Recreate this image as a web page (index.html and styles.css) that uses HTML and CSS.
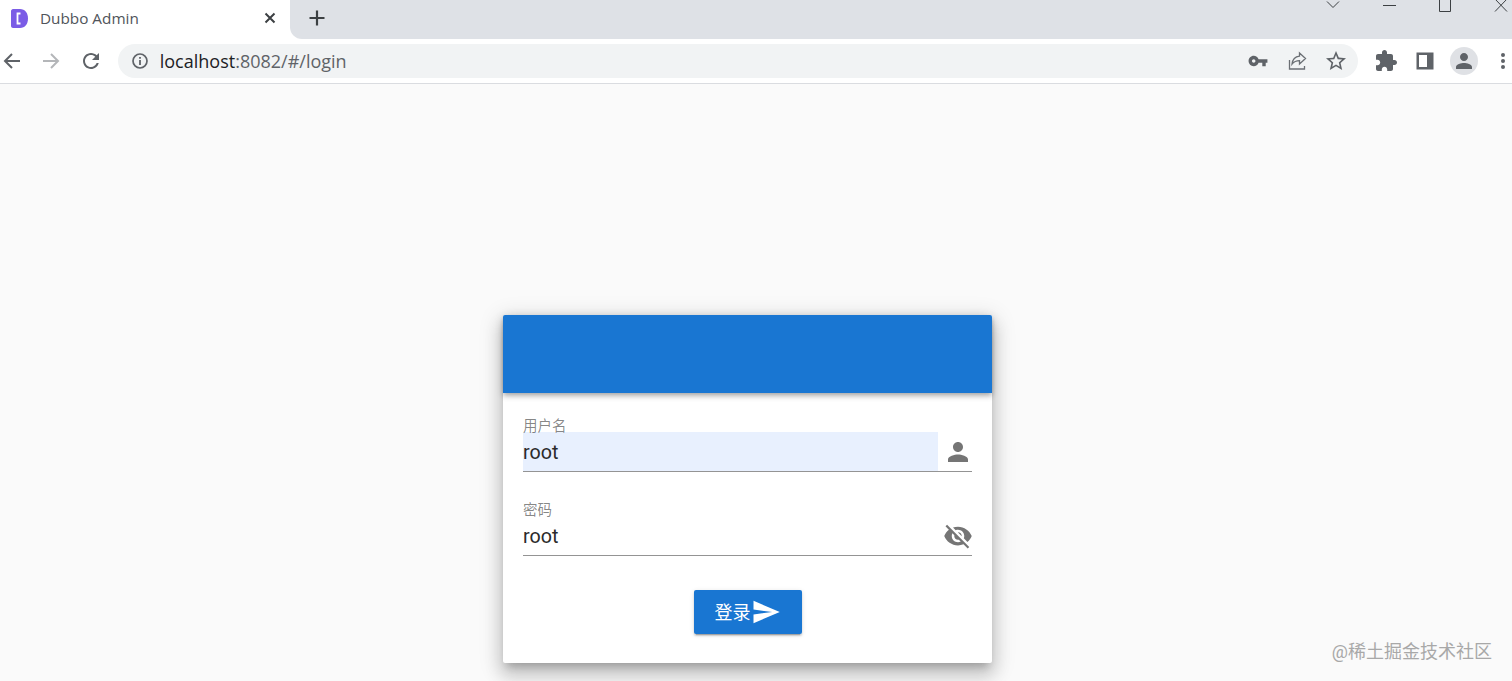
FILE: index.html

```html
<!DOCTYPE html>
<html lang="zh">
<head>
  <meta charset="UTF-8" />
  <meta name="viewport" content="width=device-width, initial-scale=1.0"/>
  <title>Dubbo Admin</title>
  <link rel="stylesheet" href="styles.css">
</head>
<body>
  <div class="tabstrip">
    <div class="tab">
      <svg class="favicon" viewBox="0 0 17 19"><path fill="#7b5ce6" d="M2 0h7c5 0 8 4 8 9.500S14 19 9 19H2c-1 0-2-1-2-2V2C0 1 1 0 2 0z"/><path fill="none" stroke="#fff" stroke-width="1.800" d="M9.500 4.500H6.500v10h3"/></svg>
      <span class="tab-title">Dubbo Admin</span>
      <svg class="icon" viewBox="0 0 24 24"><path fill="none" stroke="#3c4043" stroke-width="2" d="M7.500 6.500l9 9M16.500 6.500l-9 9"/></svg>
    </div>
    <div class="strip-rest">
      <svg class="icon new-tab" viewBox="0 0 24 24"><path fill="none" stroke="#3c4043" stroke-width="2.200" d="M12 4.500v15M4.500 12h15"/></svg>
      <div class="win-controls">
        <svg class="win-icon" viewBox="0 0 24 12"><path fill="none" stroke="#3c4043" d="M6 1.500l6 6 6-6"/></svg>
        <svg class="win-icon" viewBox="0 0 24 12"><path fill="none" stroke="#3c4043" d="M6 5.500h13"/></svg>
        <svg class="win-icon" viewBox="0 0 24 12"><path fill="none" stroke="#3c4043" d="M6.500-4h11v15.500h-11z"/></svg>
        <svg class="win-icon" viewBox="0 0 24 12"><path fill="none" stroke="#3c4043" d="M6-1l12 12.500M18-1L6 11.500"/></svg>
      </div>
    </div>
  </div>

  <div class="toolbar">
    <svg class="icon" viewBox="0 0 24 24"><path fill="none" stroke="#5f6368" stroke-width="2" d="M20 12H5M12 5l-7 7 7 7"/></svg>
    <svg class="icon" viewBox="0 0 24 24"><path fill="none" stroke="#b4b6b9" stroke-width="2" d="M4 12h15M12 5l7 7-7 7"/></svg>
    <svg class="icon" viewBox="0 0 24 24"><path fill="#5f6368" d="M17.650 6.350C16.200 4.900 14.210 4 12 4c-4.420 0-7.990 3.580-7.990 8s3.570 8 7.990 8c3.730 0 6.840-2.550 7.730-6h-2.080c-.82 2.330-3.040 4-5.650 4-3.310 0-6-2.690-6-6s2.690-6 6-6c1.660 0 3.140.69 4.220 1.780L13 11h7V4l-2.350 2.350z"/></svg>

    <div class="omnibox">
      <svg class="info" viewBox="0 0 18 18"><circle cx="9" cy="9" r="7" fill="none" stroke="#5f6368" stroke-width="1.700"/><path fill="none" stroke="#5f6368" stroke-width="1.800" d="M9 8v5M9 5v1.800"/></svg>
      <div class="url"><span class="host">localhost</span>:8082/#/login</div>
      <div class="omni-actions">
        <svg class="icon" viewBox="-2 -2 28 28"><path fill="#5f6368" d="M12.650 10C11.830 7.670 9.610 6 7 6c-3.310 0-6 2.690-6 6s2.690 6 6 6c2.610 0 4.830-1.670 5.650-4H17v4h4v-4h2v-4H12.650zM7 14c-1.100 0-2-.9-2-2s.9-2 2-2 2 .9 2 2-.9 2-2 2z"/></svg>
        <svg class="icon" viewBox="0 0 24 24"><path fill="none" stroke="#6b6f74" stroke-width="1.300" d="M4.500 11v9h15v-3M20.500 9.500l-6-5.500v3.200c-4.500.5-7 3.500-7.500 8 2-2.500 4.300-3.500 7.500-3.500V15z"/></svg>
        <svg class="icon" viewBox="0 0 24 24"><path fill="#5f6368" d="M22 9.240l-7.190-.62L12 2 9.190 8.630 2 9.240l5.460 4.730L5.820 21 12 17.270 18.180 21l-1.630-7.030L22 9.240zM12 15.400l-3.760 2.270 1-4.280-3.320-2.880 4.380-.38L12 6.100l1.710 4.040 4.380.38-3.320 2.880 1 4.280L12 15.400z"/></svg>
      </div>
    </div>

    <div class="tool-actions">
      <svg class="icon" viewBox="0 0 24 24"><path fill="#5f6368" d="M20.500 11H19V7c0-1.100-.9-2-2-2h-4V3.500C13 2.120 11.880 1 10.500 1S8 2.120 8 3.500V5H4c-1.100 0-1.990.9-1.990 2v3.800H3.500c1.490 0 2.700 1.210 2.700 2.700s-1.210 2.700-2.700 2.700H2V20c0 1.100.9 2 2 2h3.800v-1.500c0-1.490 1.210-2.700 2.700-2.700 1.490 0 2.700 1.210 2.700 2.700V22H17c1.100 0 2-.9 2-2v-4h1.500c1.380 0 2.500-1.120 2.500-2.500S21.880 11 20.500 11z"/></svg>
      <svg class="icon" viewBox="0 0 24 24"><path fill="#5f6368" fill-rule="evenodd" d="M3.500 3.500h17v17h-17zM6 6v12h8V6z"/></svg>
      <div class="avatar">
        <svg class="icon" viewBox="0 0 24 24"><path fill="#5f6368" d="M12 12c2.210 0 4-1.790 4-4s-1.790-4-4-4-4 1.790-4 4 1.790 4 4 4zm0 2c-2.670 0-8 1.340-8 4v2h16v-2c0-2.660-5.330-4-8-4z"/></svg>
      </div>
      <svg class="dots" viewBox="0 0 18 24"><circle cx="9" cy="6" r="2" fill="#5f6368"/><circle cx="9" cy="12" r="2" fill="#5f6368"/><circle cx="9" cy="18" r="2" fill="#5f6368"/></svg>
    </div>
  </div>

  <main class="page">
    <div class="card">
      <div class="card-header"></div>
      <form class="card-body">
        <div class="field">
          <label class="field-label">用户名</label>
          <div class="field-row">
            <input class="field-input autofilled" type="text" value="root" />
            <svg class="field-icon" viewBox="0 0 24 24"><path d="M12 12c2.210 0 4-1.790 4-4s-1.790-4-4-4-4 1.790-4 4 1.790 4 4 4zm0 2c-2.670 0-8 1.340-8 4v2h16v-2c0-2.660-5.330-4-8-4z"/></svg>
          </div>
        </div>
        <div class="field">
          <label class="field-label">密码</label>
          <div class="field-row">
            <input class="field-input" type="text" value="root" />
            <svg class="field-icon" viewBox="0 0 24 24"><path d="M12 7c2.760 0 5 2.240 5 5 0 .65-.13 1.260-.36 1.830l2.920 2.920c1.510-1.260 2.700-2.890 3.430-4.750-1.730-4.390-6-7.500-11-7.500-1.400 0-2.740.25-3.980.7l2.160 2.160C10.740 7.130 11.350 7 12 7zM2 4.270l2.280 2.280.46.46C3.080 8.300 1.780 10.020 1 12c1.730 4.390 6 7.500 11 7.500 1.550 0 3.030-.3 4.380-.84l.42.42L19.730 22 21 20.730 3.270 3 2 4.270zM7.530 9.800l1.550 1.550c-.05.21-.08.43-.08.65 0 1.660 1.340 3 3 3 .22 0 .44-.03.65-.08l1.550 1.550c-.67.33-1.410.53-2.200.53-2.760 0-5-2.240-5-5 0-.79.2-1.530.53-2.200zm4.310-.78l3.150 3.150.02-.16c0-1.660-1.340-3-3-3l-.17.01z"/></svg>
          </div>
        </div>
        <div class="actions">
          <button class="login-btn" type="button"><span class="login-text">登录</span><svg class="send" viewBox="0 0 24 24"><path fill="#fff" d="M2.010 21L23 12 2.010 3 2 10l15 2-15 2z"/></svg></button>
        </div>
      </form>
    </div>
  </main>

  <div class="watermark">@稀土掘金技术社区</div>
</body>
</html>
```

FILE: styles.css

```css
body {
  margin: 0;
  height: 681px;
  overflow: hidden;
  background-color: #fafafa;
  font-family: Roboto, "Noto Sans CJK SC", sans-serif;
}
svg {
  display: block;
  flex: none;
}
.icon {
  width: 24px;
  height: 24px;
}

/* browser chrome */
.tabstrip {
  display: flex;
  height: 39px;
  background: #fff;
}
.tab {
  display: flex;
  align-items: center;
  width: 290px;
  padding: 0 8px 2px 11px;
  box-sizing: border-box;
}
.favicon {
  width: 17px;
  height: 19px;
}
.tab-title {
  flex: 1;
  margin-left: 12px;
  padding-bottom: 2px;
  font-family: "Open Sans", sans-serif;
  font-size: 15.300px;
  color: #50545a;
}
.strip-rest {
  flex: 1;
  display: flex;
  align-items: flex-start;
  overflow: hidden;
  background: #dee1e6;
  border-bottom-left-radius: 12px;
}
.new-tab {
  margin: 6px 0 0 15px;
}
.win-controls {
  display: flex;
  gap: 32px;
  margin-left: auto;
  margin-right: -1px;
}
.win-icon {
  width: 24px;
  height: 12px;
}
.toolbar {
  display: flex;
  align-items: center;
  gap: 15.250px;
  height: 43px;
  padding-bottom: 1px;
  background: #fff;
  border-bottom: 1px solid #dadce0;
}
.omnibox {
  display: flex;
  align-items: center;
  width: 1240px;
  height: 34px;
  padding: 0 10px 0 13px;
  box-sizing: border-box;
  background: #f1f3f4;
  border-radius: 17px;
}
.info {
  width: 18px;
  height: 18px;
}
.url {
  flex: 1;
  margin-left: 11px;
  font-family: "Open Sans", sans-serif;
  font-size: 18px;
  color: #5f6368;
}
.host {
  color: #202124;
}
.omni-actions, .tool-actions {
  display: flex;
  align-items: center;
  gap: 15px;
}
.tool-actions {
  margin-left: 1px;
}
.avatar {
  display: flex;
  align-items: center;
  justify-content: center;
  width: 28px;
  height: 28px;
  margin: 0 -2px;
  border-radius: 50%;
  background: #dfe1e5;
}
.dots {
  width: 18px;
  height: 24px;
  margin-left: 3px;
}

/* login page */
.page {
  display: flex;
  justify-content: center;
  padding: 231px 17px 0 0;
}
.card {
  width: 489px;
  background: #fff;
  border-radius: 2px;
  box-shadow: 0 7px 8px -4px rgba(0,0,0,.2), 0 12px 17px 2px rgba(0,0,0,.14), 0 5px 22px 4px rgba(0,0,0,.12);
}
.card-header {
  height: 78px;
  background: #1976d2;
  border-radius: 2px 2px 0 0;
  box-shadow: 0 2px 4px -1px rgba(0,0,0,.2), 0 4px 5px 0 rgba(0,0,0,.14), 0 1px 10px 0 rgba(0,0,0,.12);
}
.card-body {
  padding: 26px 20px 29px;
}
.field {
  margin-bottom: 31px;
}
.field-label {
  display: block;
  position: relative;
  margin-bottom: -2px;
  font-size: 14.500px;
  line-height: 15px;
  color: rgba(0,0,0,.48);
}
.field-row {
  display: flex;
  gap: 5px;
  height: 40px;
  box-sizing: border-box;
  border-bottom: 1px solid #949494;
}
.field-input {
  flex: 1;
  min-width: 0;
  padding: 1px 0 0;
  border: none;
  outline: none;
  background: transparent;
  font-family: Roboto, sans-serif;
  font-size: 19.700px;
  color: #2b2b2b;
}
.autofilled {
  background: #e8f0fe;
}
.field-icon {
  width: 30px;
  height: 30px;
  margin: 5px -1px 0 0;
  fill: #757575;
}
.actions {
  display: flex;
  justify-content: center;
  margin-top: 34px;
}
.login-btn {
  display: flex;
  align-items: center;
  justify-content: center;
  width: 108px;
  height: 44px;
  padding: 0;
  border: none;
  border-radius: 2px;
  background: #1976d2;
  color: #fff;
  font-family: "Noto Sans CJK SC", sans-serif;
  font-size: 18px;
  box-shadow: 0 3px 1px -2px rgba(0,0,0,.2), 0 2px 2px 0 rgba(0,0,0,.14), 0 1px 5px 0 rgba(0,0,0,.12);
}
.login-text {
  margin-bottom: 2px;
}
.send {
  width: 30px;
  height: 30px;
}
.watermark {
  position: absolute;
  right: 20px;
  top: 637px;
  font-family: Roboto, "Noto Sans CJK SC", sans-serif;
  font-size: 18px;
  color: #a8a8a8;
}
```
